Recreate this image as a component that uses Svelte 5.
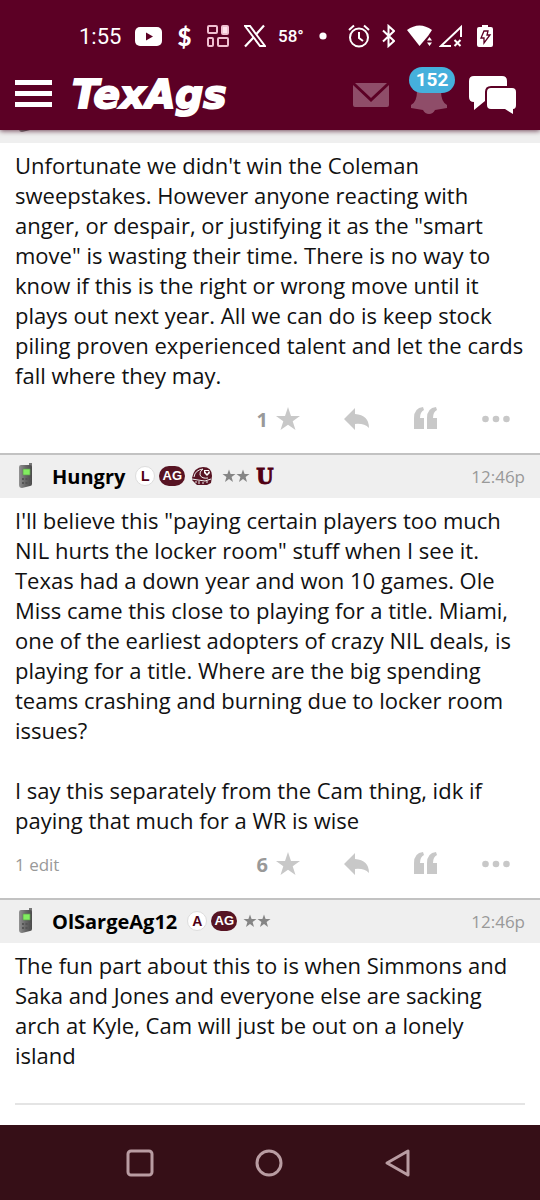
<script>
    let unread = $state(152);

    let posts = $state([
        {
            author: null,
            badges: [],
            time: '',
            paragraphs: [
                `Unfortunate we didn't win the Coleman sweepstakes. However anyone reacting with anger, or despair, or justifying it as the "smart move" is wasting their time. There is no way to know if this is the right or wrong move until it plays out next year. All we can do is keep stock piling proven experienced talent and let the cards fall where they may.`
            ],
            stars: 1,
            edits: '',
            actions: true
        },
        {
            author: 'Hungry',
            badges: ['L', 'AG', 'helmet', 'stars', 'U'],
            time: '12:46p',
            paragraphs: [
                `I'll believe this "paying certain players too much NIL hurts the locker room" stuff when I see it. Texas had a down year and won 10 games. Ole Miss came this close to playing for a title. Miami, one of the earliest adopters of crazy NIL deals, is playing for a title. Where are the big spending teams crashing and burning due to locker room issues?`,
                `I say this separately from the Cam thing, idk if paying that much for a WR is wise`
            ],
            stars: 6,
            edits: '1 edit',
            actions: true
        },
        {
            author: 'OlSargeAg12',
            badges: ['A', 'AG', 'stars'],
            time: '12:46p',
            paragraphs: [
                `The fun part about this to is when Simmons and Saka and Jones and everyone else are sacking arch at Kyle, Cam will just be out on a lonely island`
            ],
            stars: 0,
            edits: '',
            actions: false
        }
    ]);
</script>

{#snippet phone()}
    <svg class="phone" width="18" height="26" viewBox="0 0 18 26" aria-hidden="true">
        <defs>
            <linearGradient id="shell" x1="0" x2="1">
                <stop offset="0" stop-color="#929292" />
                <stop offset="0.5" stop-color="#686868" />
                <stop offset="1" stop-color="#4b4b4b" />
            </linearGradient>
        </defs>
        <path d="M14 0h3v6h-3z" fill="#777" />
        <path d="M6 2h9q2 0 2 2v17q0 2-2 2l-8 2q-3 0-3-3V4q0-2 2-2z" fill="url(#shell)" />
        <path d="M8 6h7v6H8z" fill="#82ed60" stroke="#5f9a50" stroke-width=".7" />
        <path d="M7 15h2v2H7zm3.500 0h2v2h-2zm3.500 0h2v2h-2zM7 19h2v2H7zm3.500 0h2v2h-2zm3.500 0h2v2h-2z" fill="#555" />
    </svg>
{/snippet}

{#snippet badge(kind)}
    {#if kind === 'AG'}
        <span class="pill">AG</span>
    {:else if kind === 'helmet'}
        <svg class="helmet" width="22" height="20" viewBox="0 0 22 20" aria-hidden="true">
            <path d="M1 12Q3 1 12 1q9 0 9 9l-1 7-4 2H6l-5-5z" fill="#571423" />
            <path d="M3 11q1-7 9-8-4 3-3 6 2 4 8 3" fill="none" stroke="#efefef" />
            <path d="M13 4h5l1 3-3 3-3-3z" fill="#fff" />
            <path d="M14 5l2 3 2-3z" fill="#571423" />
            <path d="M1 13l6 1 7 1 6-2M5 15v2M8 15v3M12 16v2M16 15v2" fill="none" stroke="#efefef" />
        </svg>
    {:else if kind === 'stars'}
        <svg class="stars" width="28" height="14" viewBox="0 0 28 14" aria-hidden="true">
            <path d="M7 .5l1.600 4.600h4.900l-3.900 3 1.400 4.900-4-2.900L3 13l1.400-4.900-3.900-3h4.900z" />
            <path d="M21 .5l1.600 4.600h4.900l-3.900 3L25 13l-4-2.900-4 2.900 1.400-4.900-3.900-3h4.900z" />
        </svg>
    {:else if kind === 'U'}
        <span class="varsity">U</span>
    {:else}
        <span class="round">{kind}</span>
    {/if}
{/snippet}

<div class="app">
    <header>
        <div class="status">
            <span class="clock">1:55</span>
            <svg width="31" height="24" viewBox="0 0 31 24">
                <rect x="2" y="3" width="27" height="19" rx="5" fill="#fff" />
                <path d="M13 8.500v8l7-4z" fill="#5c0025" />
            </svg>
            <span class="dollar">$</span>
            <svg width="27" height="24" viewBox="0 0 27 24" fill="none" stroke="#f0bfd0" stroke-width="2">
                <rect x="3" y="2" width="9" height="7" rx="1" />
                <rect x="17" y="2" width="6" height="8" rx="1" fill="#ffe3ec" />
                <rect x="3" y="14" width="5" height="8" rx="1" />
                <rect x="13" y="14" width="10" height="8" rx="1" />
            </svg>
            <svg width="22" height="24" viewBox="0 0 22 24" fill="none" stroke="#fff">
                <path d="M1 2h5l15 20h-5z" stroke-width="2" />
                <path d="M20 1.500l-8 9M9.500 13.500L1 22.500" stroke-width="2.200" />
            </svg>
            <span class="temp">58°</span>
            <svg width="22" height="24" viewBox="0 0 22 24"><circle cx="9" cy="12" r="3.600" fill="#fff" /></svg>
            <svg width="22" height="24" viewBox="0 0 22 24" fill="none" stroke="#fff" stroke-width="2">
                <circle cx="11" cy="13.500" r="9" />
                <path d="M11 8v6l4 3M1 6l5-4.500M21 6l-5-4.500" />
            </svg>
            <svg width="13" height="24" viewBox="0 0 13 24" fill="none" stroke="#fff" stroke-width="2">
                <path d="M1 6.500l11 10.500-5.500 5V2L12 7 1 17.500" />
            </svg>
            <div class="signals">
                <svg width="26" height="24" viewBox="0 0 26 24" fill="#fff">
                    <path d="M0 6q12.500-9 25 0l-4 6-8.500 10z" />
                    <path d="M19 17l4-5 4 5v6h-8z" fill="#5c0025" />
                    <path d="M20 16.500l2.500-3.500 2.500 3.500zm0 2h5l-2.500 3.500z" />
                </svg>
                <svg width="24" height="24" viewBox="0 0 24 24" fill="none" stroke="#fff" stroke-width="2">
                    <path d="M12 22H2L22 3v10" />
                    <path d="M15.500 16l6 6m0-6l-6 6" />
                </svg>
            </div>
            <svg width="20" height="24" viewBox="0 0 20 24">
                <path d="M7 1h6v2h3q2 0 2 2v16q0 2-2 2H4q-2 0-2-2V5q0-2 2-2h3z" fill="#fff" />
                <path d="M9 7h4l-1 4h3l-6 8v-5H6z" fill="none" stroke="#5c0025" stroke-width="1.300" />
            </svg>
        </div>

        <div class="bar">
            <button class="menu" aria-label="Menu"><i></i><i></i><i></i></button>
            <a class="logo" href="/">TexAgs</a>
            <nav class="tools">
                <button aria-label="Mail">
                    <svg width="36" height="26" viewBox="0 0 36 26" fill="#8f4d69">
                        <path d="M2 1h32L18 16z" />
                        <path d="M0 3l18 17L36 3v20q0 2-2 2H2q-2 0-2-2z" />
                    </svg>
                </button>
                <button class="bell" aria-label="Notifications">
                    <svg width="36" height="38" viewBox="0 0 36 38" fill="#8f4d69">
                        <path d="M18 2q12 0 12 13 0 11 6 14v3l-12 2q-2 4-6 4t-6-4L0 32v-3q6-3 6-14Q6 2 18 2z" />
                    </svg>
                    <span class="count">{unread}</span>
                </button>
                <button aria-label="Forums">
                    <svg width="48" height="40" viewBox="0 0 48 40" fill="#fff">
                        <path d="M5 1h28q5 0 5 5v5H22q-6 0-6 6v9L5 35v-8q-5 0-5-5V6q0-5 5-5z" />
                        <path d="M22 13h21q4 0 4 4v13q0 4-3 4v5l-8-5H22q-4 0-4-4V17q0-4 4-4z" />
                    </svg>
                </button>
            </nav>
        </div>
    </header>

    <main>
        {#each posts as post}
            <article>
                {#if post.author}
                    <div class="post-head">
                        {@render phone()}
                        <a class="author" href="/users/{post.author}">{post.author}</a>
                        <div class="badges">
                            {#each post.badges as kind}
                                {@render badge(kind)}
                            {/each}
                        </div>
                        <time>{post.time}</time>
                    </div>
                {:else}
                    <!-- head scrolled under the fixed bar -->
                    <div class="post-head tucked">
                        {@render phone()}
                    </div>
                {/if}

                <div class="body">
                    {#each post.paragraphs as text}
                        <p>{text}</p>
                    {/each}
                </div>

                {#if post.actions}
                    <div class="actions">
                        <span class="edits">{post.edits}</span>
                        <button class="star" aria-label="Star" onclick={() => post.stars++}>
                            <b>{post.stars}</b>
                            <svg width="24" height="24" viewBox="0 0 24 24">
                                <path d="M12 0l3 9h9l-7.300 5.300L19.500 23 12 17.700 4.500 23l2.800-8.700L0 9h9z" />
                            </svg>
                        </button>
                        <button aria-label="Reply">
                            <svg width="26" height="24" viewBox="0 0 26 24">
                                <path d="M0 12L11 1v6q14 1 14 14-5-5-14-4v6z" />
                            </svg>
                        </button>
                        <button aria-label="Quote">
                            <svg width="24" height="24" viewBox="0 0 24 24">
                                <path d="M0 22V11Q0 1 9 0l1 3q-4 2-4 8h4v11zM13 22V11q0-10 9-11l1 3q-4 2-4 8h4v11z" />
                            </svg>
                        </button>
                        <button aria-label="More">
                            <svg width="28" height="24" viewBox="0 0 28 24">
                                <circle cx="3.500" cy="12" r="3.300" />
                                <circle cx="14" cy="12" r="3.300" />
                                <circle cx="24.500" cy="12" r="3.300" />
                            </svg>
                        </button>
                    </div>
                {:else}
                    <hr />
                {/if}
            </article>
        {/each}
    </main>

    <footer>
        <button aria-label="Recent apps">
            <svg width="30" height="30" viewBox="0 0 30 30"><rect x="3" y="3" width="24" height="24" rx="3" /></svg>
        </button>
        <button aria-label="Home">
            <svg width="30" height="30" viewBox="0 0 30 30"><circle cx="15" cy="15" r="12" /></svg>
        </button>
        <button aria-label="Back">
            <svg width="30" height="30" viewBox="0 0 30 30"><path d="M4 15L25 3v24z" /></svg>
        </button>
    </footer>
</div>

<style>
    :global(body) {
        margin: 0;
        background: #fff;
    }

    .app {
        display: flex;
        flex-direction: column;
        min-height: 100vh;
        font-family: "Open Sans", "Noto Sans", sans-serif;
        font-size: 22px;
        color: #111;
    }

    svg {
        display: block;
        flex: none;
    }

    button {
        display: flex;
        align-items: center;
        padding: 0;
        border: 0;
        background: none;
        font: inherit;
        color: inherit;
        cursor: pointer;
    }

    a {
        color: inherit;
        text-decoration: none;
    }

    header {
        position: relative;
        z-index: 1;
        background: #5c0025;
        color: #fff;
        box-shadow: 0 1px 5px rgba(60, 0, 25, 0.7);
    }

    .status {
        display: flex;
        align-items: center;
        gap: 12px;
        height: 36px;
        padding: 18px 44px 6px 79px;
        font-family: Roboto, sans-serif;
    }

    .clock {
        width: 42px;
        font-size: 22px;
    }

    .dollar {
        width: 17px;
        font-family: Lato, sans-serif;
        font-size: 24px;
        font-weight: 900;
        text-align: center;
    }

    .temp {
        width: 24px;
        font-size: 17px;
        font-weight: 500;
    }

    .signals {
        display: flex;
        gap: 6px;
    }

    .bar {
        display: flex;
        align-items: center;
        height: 70px;
        padding: 0 23px 0 15px;
    }

    .menu {
        flex-direction: column;
        gap: 6px;
        width: 37px;
        margin-right: 20px;
        padding-bottom: 4px;
    }

    .menu i {
        width: 100%;
        height: 5px;
        background: #fff;
    }

    .logo {
        font-family: "DejaVu Sans", sans-serif;
        font-size: 39px;
        font-weight: 700;
        font-style: italic;
        line-height: 44px;
        -webkit-text-stroke: 2px #fff;
    }

    .tools {
        display: flex;
        align-items: center;
        gap: 22px;
        margin-left: auto;
    }

    .bell {
        position: relative;
    }

    .count {
        position: absolute;
        top: -9px;
        left: -2px;
        width: 46px;
        border-radius: 13px;
        background: #45b0dc;
        font-family: Roboto, sans-serif;
        font-size: 19px;
        font-weight: 700;
        line-height: 26px;
        text-align: center;
    }

    main {
        flex: 1;
    }

    article + article {
        border-top: 2px solid #c2c2c2;
    }

    .post-head {
        display: flex;
        align-items: center;
        box-sizing: border-box;
        height: 43px;
        padding: 0 15px 1px;
        background: #efefef;
    }

    .post-head.tucked {
        align-items: flex-end;
        height: 13px;
        padding-bottom: 10px;
    }

    .phone {
        margin-right: 19px;
    }

    .author {
        color: #000;
        font-size: 20px;
        font-weight: 700;
    }

    .badges {
        display: flex;
        align-items: center;
        gap: 4px;
        margin-left: 10px;
        font-family: "Liberation Sans", sans-serif;
        font-weight: 700;
    }

    .round {
        box-sizing: border-box;
        width: 20px;
        height: 20px;
        border: 1px solid #ddd;
        border-radius: 50%;
        background: #fff;
        color: #500014;
        font-size: 14px;
        line-height: 18px;
        text-align: center;
    }

    .pill {
        width: 26px;
        border-radius: 10px;
        background: #571423;
        color: #fff;
        font-size: 13px;
        line-height: 20px;
        text-align: center;
    }

    .helmet {
        margin: 0 3px 0 2px;
    }

    .stars {
        margin: 0 2px;
        fill: #858585;
    }

    .varsity {
        color: #500014;
        font-family: "DejaVu Serif Condensed", "DejaVu Serif", serif;
        font-size: 22px;
        line-height: 24px;
        -webkit-text-stroke: 1px #500014;
    }

    time {
        margin-left: auto;
        color: #999;
        font-size: 17px;
    }

    .body {
        padding: 7px 15px 0;
        line-height: 30px;
    }

    p {
        margin: 0;
    }

    p + p {
        margin-top: 30px;
    }

    .actions {
        display: flex;
        align-items: center;
        gap: 44px;
        height: 58px;
        padding: 0 30px 5px 15px;
        color: #999;
        fill: #c8c8c8;
    }

    .edits {
        margin-right: auto;
        font-size: 17px;
    }

    .star {
        gap: 8px;
        font-size: 20px;
    }

    hr {
        height: 2px;
        margin: 33px 15px 20px;
        border: 0;
        background: #e4e4e4;
    }

    footer {
        display: flex;
        justify-content: center;
        align-items: center;
        gap: 99px;
        height: 75px;
        padding-right: 3px;
        background: #360f17;
        fill: none;
        stroke: #b99ca2;
        stroke-width: 3px;
        stroke-linejoin: round;
    }
</style>
